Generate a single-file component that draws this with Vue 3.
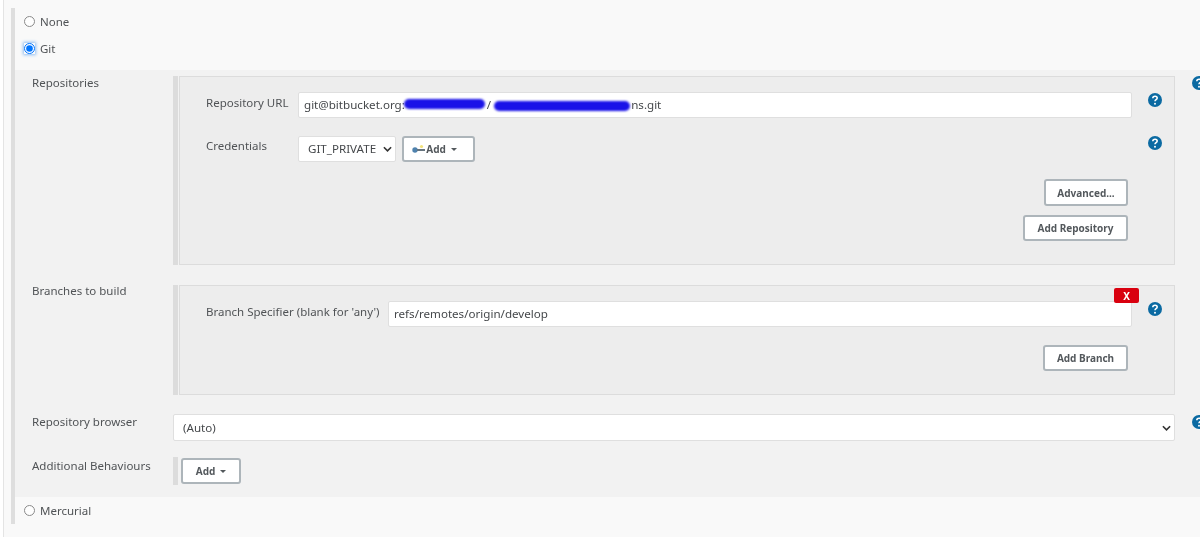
<script setup>
const helps = 'M5.5 6.1c0-1.5 1.1-2.4 2.6-2.4s2.4.9 2.4 2.1c0 1.8-2.5 1.9-2.5 3.7'
</script>

<template>
  <div class="page">
    <div class="tree">
      <label class="radio-row first"><input type="radio" name="scm" /><span>None</span></label>
      <label class="radio-row second"><input class="focused" type="radio" name="scm" checked /><span>Git</span></label>

      <section class="git">
        <div class="row repos">
          <div class="label">Repositories</div>
          <div class="bar-wrap">
            <div class="bar"></div>
            <div class="box repo-box">
              <div class="field url-field">
                <div class="field-label url-label">Repository URL</div>
                <div class="input url-input">git@bitbucket.org:<span class="hidden-a"></span>/<span class="hidden-b"></span>ns.git<i class="blob blob-a"></i><i class="blob blob-b"></i></div>
                <span class="help inner"><svg viewBox="0 0 16 16"><circle cx="8" cy="8" r="8" fill="#0b6aa2"/><path :d="helps" fill="none" stroke="#fff" stroke-width="1.8"/><circle cx="8" cy="12.3" r="1.1" fill="#fff"/></svg></span>
              </div>
              <div class="field cred-field">
                <div class="field-label url-label cred-label">Credentials</div>
                <div class="cred-controls">
                  <div class="select cred-select">
                    <span>GIT_PRIVATE</span>
                    <svg class="chev" viewBox="0 0 10 6"><path d="M1 1l4 4 4-4" fill="none" stroke="#333" stroke-width="1.8"/></svg>
                  </div>
                  <button class="btn key-btn">
                    <svg class="key" viewBox="0 0 13 10"><circle cx="3" cy="6" r="2.7" fill="#4f82ad"/><rect x="5" y="5" width="8" height="2" fill="#66747e"/><circle cx="9.5" cy="2.5" r="1.6" fill="#f3e27a"/></svg>
                    Add
                    <i class="caret"></i>
                  </button>
                </div>
                <span class="help inner cred-help"><svg viewBox="0 0 16 16"><circle cx="8" cy="8" r="8" fill="#0b6aa2"/><path :d="helps" fill="none" stroke="#fff" stroke-width="1.8"/><circle cx="8" cy="12.3" r="1.1" fill="#fff"/></svg></span>
              </div>
              <div class="actions adv"><button class="btn adv-btn">Advanced...</button></div>
              <div class="actions add-repo"><button class="btn repo-btn">Add Repository</button></div>
            </div>
          </div>
          <span class="help outer"><svg viewBox="0 0 16 16"><circle cx="8" cy="8" r="8" fill="#0b6aa2"/><path :d="helps" fill="none" stroke="#fff" stroke-width="1.8"/><circle cx="8" cy="12.3" r="1.1" fill="#fff"/></svg></span>
        </div>

        <div class="row branches">
          <div class="label">Branches to build</div>
          <div class="bar-wrap">
            <div class="bar"></div>
            <div class="box branch-box">
              <button class="del">X</button>
              <div class="field branch-field">
                <div class="field-label branch-label">Branch Specifier (blank for 'any')</div>
                <div class="input branch-input">refs/remotes/origin/develop</div>
                <span class="help inner"><svg viewBox="0 0 16 16"><circle cx="8" cy="8" r="8" fill="#0b6aa2"/><path :d="helps" fill="none" stroke="#fff" stroke-width="1.8"/><circle cx="8" cy="12.3" r="1.1" fill="#fff"/></svg></span>
              </div>
              <div class="actions add-branch"><button class="btn branch-btn">Add Branch</button></div>
            </div>
          </div>
        </div>

        <div class="row browser">
          <div class="label">Repository browser</div>
          <div class="select browser-select">
            <span>(Auto)</span>
            <svg class="chev" viewBox="0 0 10 6"><path d="M1 1l4 4 4-4" fill="none" stroke="#333" stroke-width="1.8"/></svg>
          </div>
          <span class="help outer browser-help"><svg viewBox="0 0 16 16"><circle cx="8" cy="8" r="8" fill="#0b6aa2"/><path :d="helps" fill="none" stroke="#fff" stroke-width="1.8"/><circle cx="8" cy="12.3" r="1.1" fill="#fff"/></svg></span>
        </div>

        <div class="row behaviours">
          <div class="label">Additional Behaviours</div>
          <div class="beh-wrap">
            <div class="bar"></div>
            <button class="btn beh-btn">Add <i class="caret"></i></button>
          </div>
        </div>
      </section>

      <label class="radio-row third"><input type="radio" name="scm" /><span>Mercurial</span></label>
    </div>
  </div>
</template>

<style>
html, body { margin: 0; background: #f9f9f9; }
</style>

<style scoped>
.page {
  width: 1200px;
  height: 537px;
  box-sizing: border-box;
  overflow: hidden;
  background: #f9f9f9;
  padding: 8px 0 0 11px;
  font-family: "Noto Sans", "Open Sans", sans-serif;
  font-size: 11.5px;
  color: #505356;
  position: relative;
  filter: blur(0.3px);
}
.page::before {
  content: "";
  position: absolute;
  left: 0; top: 0; bottom: 0;
  width: 3px;
  background: #fff;
  border-right: 1px solid #e4e4e4;
}
.tree {
  border-left: 4px solid #dedede;
  height: 516px;
  display: flex;
  flex-direction: column;
}
.radio-row { display: flex; align-items: center; gap: 5px; padding-left: 9px; height: 14px; }
.radio-row input { margin: 0; width: 11px; height: 11px; opacity: 0.85; }
.radio-row input.focused { box-shadow: 0 0 3px 1px #8fbdf2; border-radius: 50%; opacity: 1; }
.first { margin-top: 6px; }
.second { margin-top: 13px; }
.third { margin-top: 6px; }
.git { margin-top: 15px; background: #f2f2f2; height: 427px; display: flex; flex-direction: column; }

.row { display: grid; grid-template-columns: 158px 1002px 40px; }
.label { padding-left: 17px; }
.repos { padding-top: 6px; }
.repos .label { margin-top: -1px; }
.bar-wrap { display: flex; gap: 1px; }
.bar { width: 5px; background: #dcdcdc; flex: none; }
.box {
  flex: 1;
  background: #ededed;
  border: 1px solid #dcdcdc;
  box-sizing: border-box;
  position: relative;
}
.repo-box { height: 189px; padding-top: 15px; }
.field { display: flex; align-items: flex-start; height: 26px; }
.field-label { white-space: nowrap; }
.url-label { width: 92px; padding-left: 26px; padding-top: 3px; }
.cred-label { padding-top: 2px; }
.input {
  background: #fff;
  border: 1px solid #dfdfdf;
  border-radius: 2px;
  height: 26px;
  box-sizing: border-box;
  padding: 0 5px;
  line-height: 24px;
  font-size: 11.6px;
  color: #45484b;
  position: relative;
  white-space: nowrap;
}
.url-input { width: 834px; }
.hidden-a { display: inline-block; width: 82px; }
.hidden-b { display: inline-block; width: 140px; }
.blob { position: absolute; background: #1a12e8; border-radius: 6px; filter: blur(1px); }
.blob-a { left: 105px; top: 6px; width: 81px; height: 10px; }
.blob-b { left: 195px; top: 8px; width: 136px; height: 10px; }
.help { display: block; width: 16px; height: 16px; }
.help svg { display: block; width: 14px; height: 14px; }
.help.inner { margin: 0 0 0 16px; padding-top: 1px; }
.help.outer { padding: 0 0 0 17px; }
.cred-help { margin-top: -1px !important; }
.browser-help { padding-top: 1px !important; }
.cred-field { margin-top: 18px; }
.cred-controls { display: flex; gap: 6px; width: 834px; }
.select {
  background: #fff;
  border: 1px solid #dfdfdf;
  border-radius: 2px;
  height: 26px;
  box-sizing: border-box;
  line-height: 24px;
  font-size: 11.6px;
  position: relative;
  display: flex;
  align-items: center;
  justify-content: space-between;
  color: #45484b;
}
.cred-select { width: 98px; padding: 0 3px 0 9px; }
.browser-select { width: 1002px; height: 27px; padding: 0 3px 0 9px; }
.chev { width: 9px; height: 6px; }
.btn {
  background: #fff;
  border: 2px solid #adb5ba;
  border-radius: 3px;
  font: 700 10px "Noto Sans", sans-serif;
  color: #53585c;
  height: 26px;
  box-sizing: border-box;
  padding: 0;
  display: inline-flex;
  align-items: center;
  justify-content: center;
  gap: 1px;
}
.key-btn { width: 73px; padding-right: 8px; }
.key { width: 13px; height: 10px; }
.caret { width: 0; height: 0; border: 3px solid transparent; border-top-color: #53585c; border-bottom: 0; margin-left: 4px; }
.actions { display: flex; justify-content: flex-end; padding-right: 46px; }
.adv { margin-top: 17px; }
.add-repo { margin-top: 9px; }
.adv-btn { width: 84px; height: 27px; }
.repo-btn { width: 105px; }

.branches { margin-top: 20px; }
.branches .label { margin-top: -2px; }
.branch-box { height: 110px; padding-top: 15px; }
.del {
  position: absolute;
  left: 934px; top: 2px;
  width: 25px; height: 15px;
  background: #d9000f;
  border: 0; border-radius: 2px;
  color: #fff;
  font: 700 10px "Noto Sans", sans-serif;
  padding: 0;
  z-index: 1;
}
.branch-label { padding: 3px 0 0 26px; box-sizing: border-box; width: 208px; }
.branch-input { width: 744px; }
.add-branch { margin-top: 18px; }
.branch-btn { width: 85px; }

.browser { margin-top: 19px; }
.behaviours { margin-top: 16px; }
.behaviours .label { margin-top: 1px; }
.beh-wrap { display: flex; height: 28px; gap: 3px; align-items: center; }
.beh-wrap .bar { height: 28px; }
.beh-btn { width: 60px; }
</style>
